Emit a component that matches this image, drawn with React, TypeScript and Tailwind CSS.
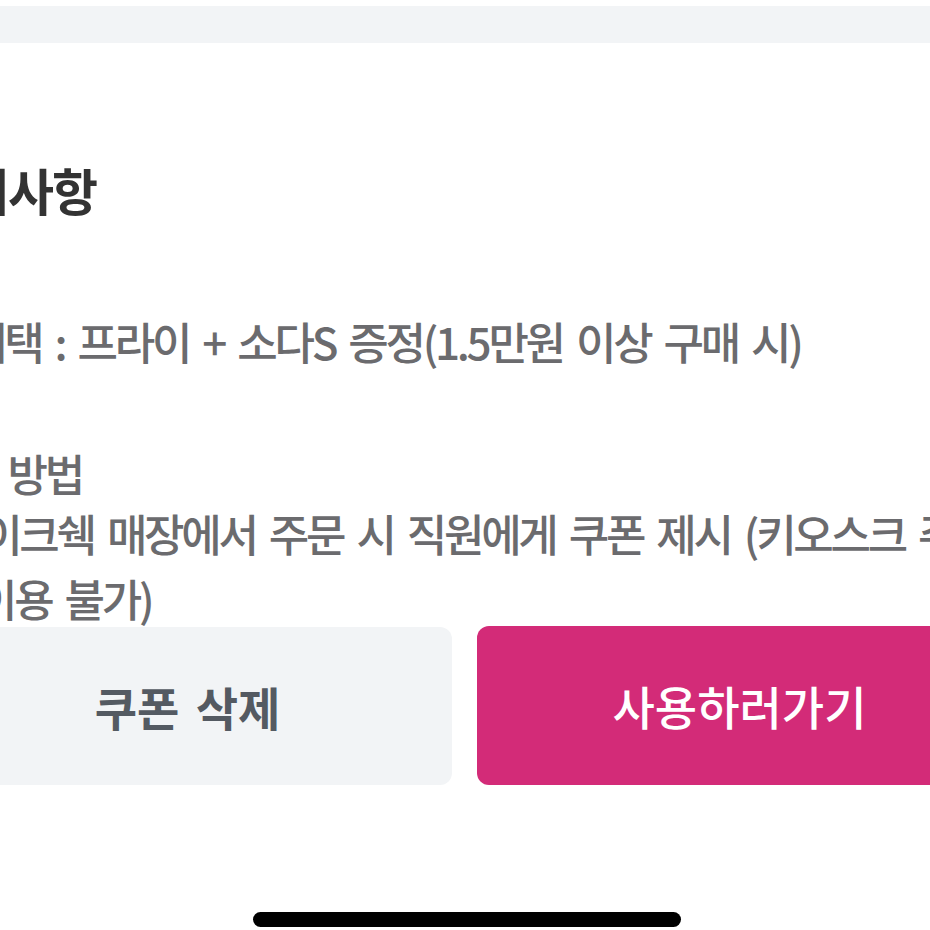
import React from "react";

const font = { fontFamily: '"Noto Sans CJK KR", "Noto Sans", sans-serif' };

const body =
  "h-[56px] leading-[56px] text-[44px] font-medium tracking-[-3.3px] [word-spacing:6.6px] text-[#6b6b6e] whitespace-nowrap";

export default function App() {
  return (
    <div
      className="w-[930px] h-[930px] overflow-hidden bg-white flex flex-col"
      style={font}
    >
      <div className="pt-[6px]">
        <div className="h-[37px] bg-[#f2f4f6]" />
      </div>
      <div className="ml-[-77px] w-[1079px] flex flex-col">
        <h2 className="mt-[118px] ml-[-3px] h-[56px] leading-[56px] text-[50px] font-bold tracking-[-2px] text-[#333333] whitespace-nowrap">
          유의사항
        </h2>
        <p className={`mt-[96px] ml-[44px] ${body}`}>
          혜택 : 프라이 + 소다S 증정(1.5만원 이상 구매 시)
        </p>
        <p className={`mt-[76px] ml-[-3px] ${body}`}>사용 방법</p>
        <p className={`mt-[2px] ml-[22px] ${body} h-[60px] leading-[60px]`}>
          쉐이크쉑 매장에서 주문 시 직원에게 쿠폰 제시 (키오스크 주문 시
        </p>
        <p className={`mt-[7px] ml-[54px] ${body}`}>이용 불가)</p>
        <div className="flex gap-[25px] h-[159px]">
          <button className="w-[529px] mt-[1px] rounded-[12px] bg-[#f2f4f6] text-[46px] font-semibold tracking-[0px] [word-spacing:6px] text-[#545a62] flex items-center justify-center">
            쿠폰 삭제
          </button>
          <button className="w-[525px] rounded-[12px] bg-[#d32b78] text-[46px] font-medium tracking-[0px] text-white flex items-center justify-center">
            사용하러가기
          </button>
        </div>
      </div>
      <div className="mt-[127px] flex justify-center">
        <div className="ml-[3px] w-[428px] h-[15px] rounded-full bg-black" />
      </div>
    </div>
  );
}
